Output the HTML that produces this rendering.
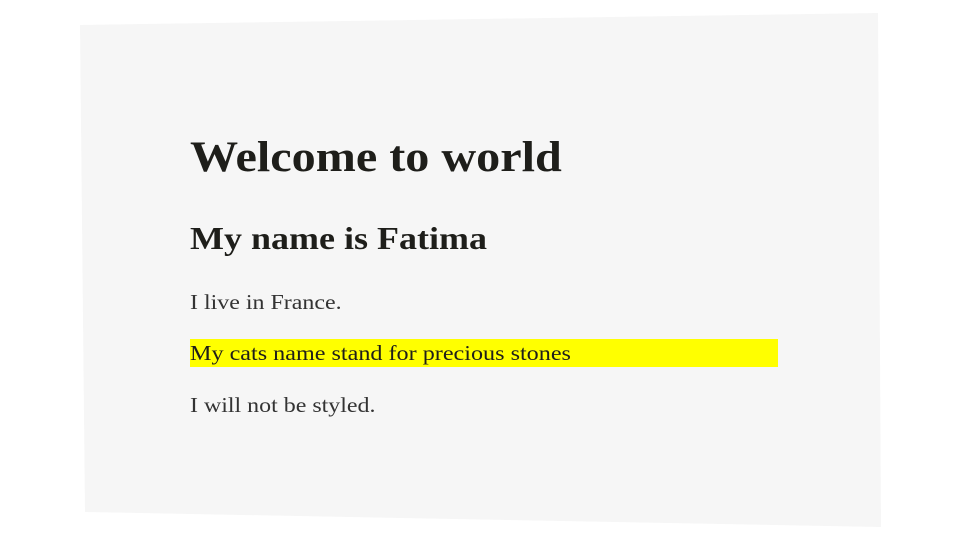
<!DOCTYPE html>
<html><head><style>
body{margin:0;width:960px;height:540px;background:#fff;position:relative;overflow:hidden;font-family:"Liberation Serif",serif;color:#1e1e1a}
.panel{position:absolute;left:0;top:0;width:960px;height:540px;background:#f6f6f6;clip-path:polygon(80px 25px,878px 13px,881px 527px,85px 512px)}
.t{position:absolute;left:190px;white-space:nowrap;line-height:1;transform-origin:0 0}
</style></head><body>
<div class="panel"></div>
<div class="t" style="top:136px;font-size:43px;font-weight:bold;transform:scaleX(1.12)">Welcome to world</div>
<div class="t" style="top:222px;font-size:32px;font-weight:bold;transform:scaleX(1.125)">My name is Fatima</div>
<div class="t" style="top:292px;font-size:21px;color:#333;transform:scaleX(1.14)">I live in France.</div>
<div style="position:absolute;left:190px;top:339px;width:588px;height:28px;background:#ffff00"></div>
<div class="t" style="top:343px;font-size:21px;transform:scaleX(1.15)">My cats name stand for precious stones</div>
<div class="t" style="top:395px;font-size:21px;color:#333;transform:scaleX(1.14)">I will not be styled.</div>
</body></html>
